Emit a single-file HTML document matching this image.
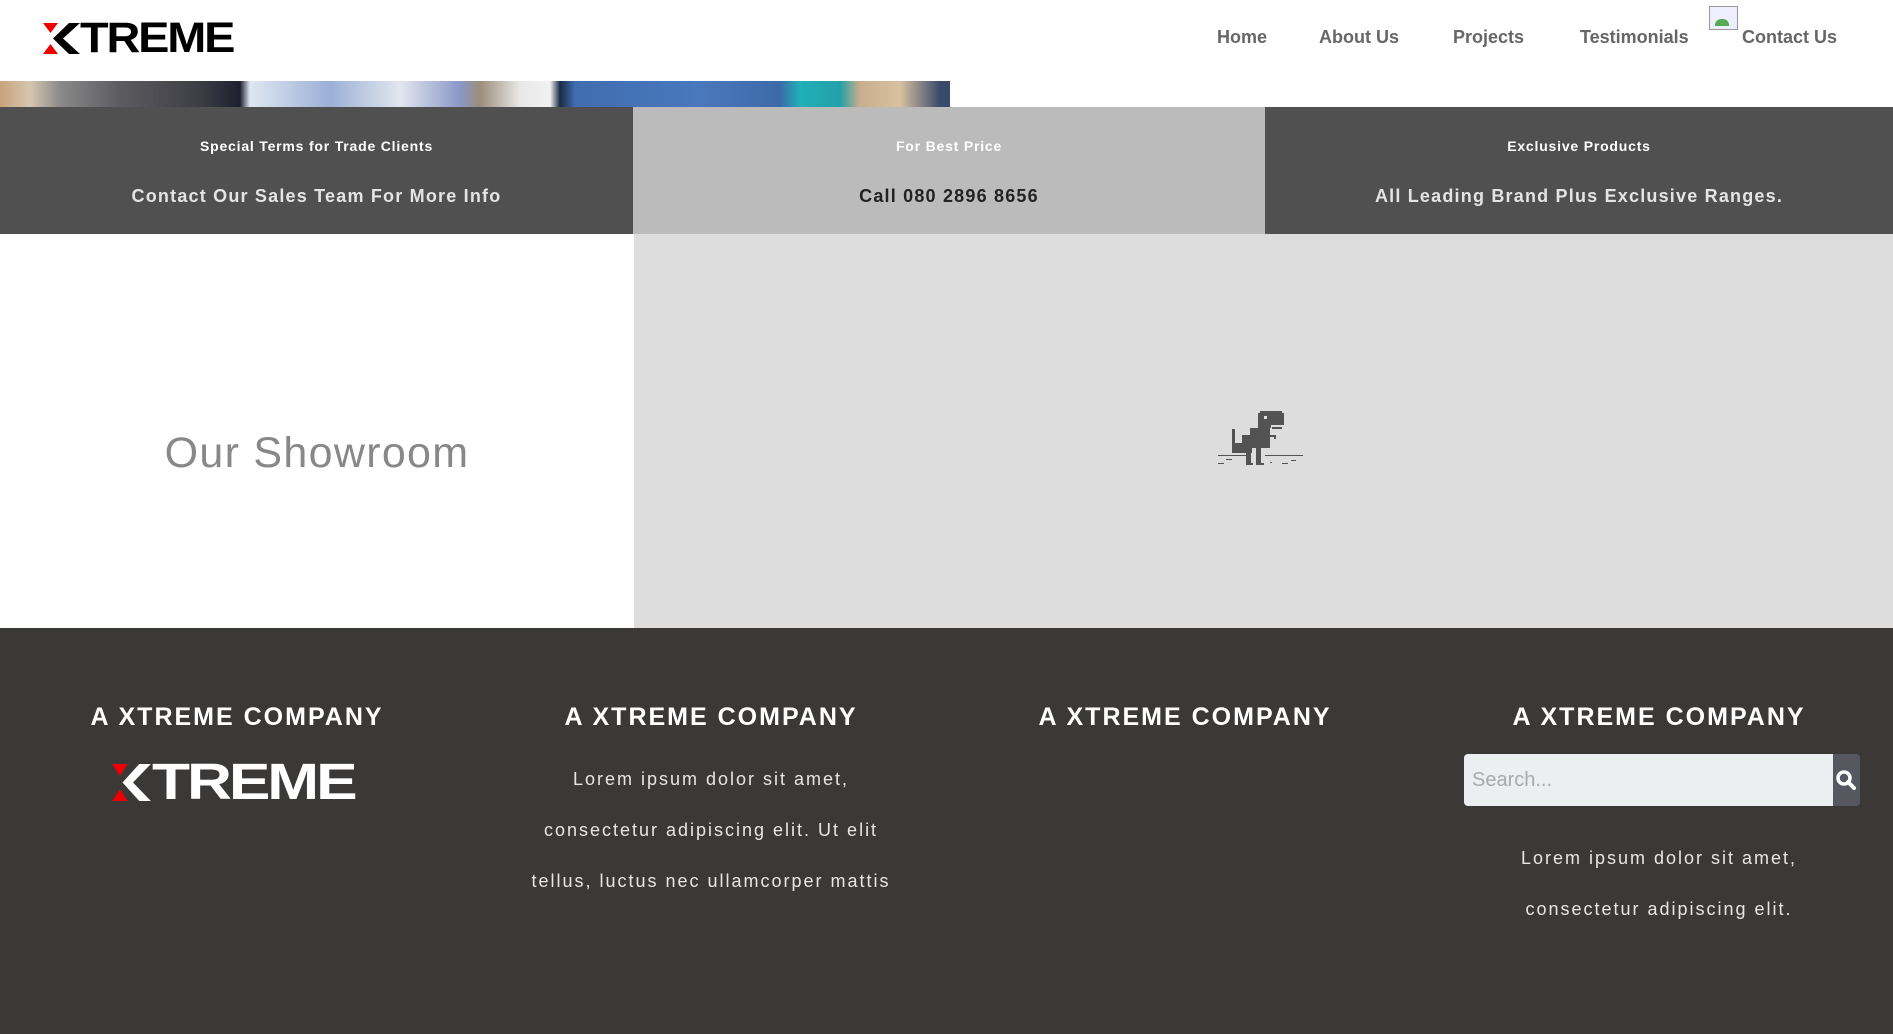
<!DOCTYPE html>
<html><head><meta charset="utf-8"><style>
*{margin:0;padding:0;box-sizing:border-box}
body{width:1893px;height:1034px;overflow:hidden;font-family:"Liberation Sans",Arial,sans-serif;background:#fff;position:relative}
.abs{position:absolute}
.nav{position:absolute;top:27px;font-size:18px;font-weight:bold;color:#666}
.band{position:absolute;top:107px;height:127px;text-align:center}
.band .t{position:absolute;top:31px;width:100%;font-size:14px;font-weight:bold;letter-spacing:0.8px;color:#fff}
.band .m{position:absolute;top:79px;width:100%;font-size:18px;font-weight:bold;letter-spacing:1.2px;color:#e4e4e4}
.fh{position:absolute;top:703px;width:474px;text-align:center;font-size:25px;font-weight:bold;letter-spacing:2px;color:#fff}
.fp{position:absolute;width:474px;text-align:center;font-size:18px;letter-spacing:2px;color:#e6e6e6;line-height:51px}
</style></head><body>
<svg class="abs" style="left:43px;top:23px" width="40" height="31" viewBox="0 0 40 31">
<polygon points="0,0 15,0 7.5,10" fill="#e00"/>
<polygon points="0,31 15,31 7.5,21" fill="#e00"/>
<polygon points="26,0 37,0 20,15.5 37,31 26,31 10,15.5" fill="#000"/>
</svg>
<div class="abs" style="left:80px;top:14px;font-size:43px;font-weight:bold;letter-spacing:-2px;color:#000;line-height:49px;transform:scaleX(1.09);transform-origin:0 0">TREME</div>
<div class="nav" style="left:1217px">Home</div>
<div class="nav" style="left:1319px">About Us</div>
<div class="nav" style="left:1453px">Projects</div>
<div class="nav" style="left:1580px">Testimonials</div>
<div class="abs" style="left:1709px;top:6px;width:29px;height:24px;border:1px solid #999;background:#eef"><div style="position:absolute;left:5px;bottom:3px;width:14px;height:7px;background:#5a5;border-radius:6px 6px 0 0"></div></div>
<div class="nav" style="left:1742px">Contact Us</div>
<div class="abs" style="left:0;top:81px;width:950px;height:26px;background:linear-gradient(90deg,#c9a37a 0,#d6c6b0 30px,#8a8a8a 60px,#5c5c60 120px,#3d3d45 200px,#1e2030 240px,#dfe6f2 250px,#9bb0d6 330px,#e2e6ee 400px,#8a98c8 460px,#9b8e7a 480px,#e8e8e8 520px,#f2f2f2 550px,#1a2a44 560px,#3f6db0 575px,#4a78bc 700px,#3c6aa8 780px,#20b0b8 800px,#22a0a8 840px,#c8ae8c 860px,#d8c0a0 900px,#3a4a6a 940px)"></div>
<div class="band" style="left:0;width:633px;background:#505050"><div class="t">Special Terms for Trade Clients</div><div class="m">Contact Our Sales Team For More Info</div></div>
<div class="band" style="left:633px;width:632px;background:#bbbbbb"><div class="t">For Best Price</div><div class="m" style="color:#222">Call 080 2896 8656</div></div>
<div class="band" style="left:1265px;width:628px;background:#505050"><div class="t">Exclusive Products</div><div class="m">All Leading Brand Plus Exclusive Ranges.</div></div>
<div class="abs" style="left:0;top:234px;width:634px;height:394px;background:#fff"></div>
<div class="abs" style="left:0;top:429px;width:634px;text-align:center;font-size:43px;letter-spacing:1.3px;color:#888">Our Showroom</div>
<div class="abs" style="left:634px;top:234px;width:1259px;height:394px;background:#dddddd"></div>
<svg class="abs" style="left:1218px;top:411px" width="86" height="60" viewBox="0 0 86 60" shape-rendering="crispEdges" fill="#535353">
<rect x="40" y="2" width="26" height="12"/><rect x="42" y="0" width="22" height="2"/><rect x="40" y="14" width="13" height="3"/><rect x="54" y="16" width="10" height="2"/>
<rect x="32" y="17" width="20" height="20"/><rect x="24" y="24" width="10" height="18"/><rect x="14" y="32" width="14" height="10"/><rect x="14" y="18" width="3" height="18"/>
<rect x="52" y="24" width="6" height="2"/><rect x="56" y="24" width="2" height="4"/>
<rect x="28" y="40" width="5" height="14"/><rect x="38" y="37" width="5" height="17"/><rect x="43" y="52" width="3" height="2"/><rect x="33" y="52" width="2" height="2"/>
<rect x="0" y="44" width="28" height="1"/><rect x="47" y="44" width="38" height="1"/>
<rect x="8" y="48" width="6" height="1"/><rect x="0" y="52" width="6" height="1"/><rect x="73" y="49" width="5" height="1"/><rect x="64" y="52" width="6" height="1"/><rect x="52" y="51" width="2" height="1"/>
<rect x="46" y="5" width="3" height="3" fill="#ddd"/>
</svg>
<div class="abs" style="left:0;top:628px;width:1893px;height:406px;background:#3a3938"></div>
<div class="fh" style="left:0">A XTREME COMPANY</div>
<div class="fh" style="left:474px">A XTREME COMPANY</div>
<div class="fh" style="left:948px">A XTREME COMPANY</div>
<div class="fh" style="left:1422px">A XTREME COMPANY</div>
<svg class="abs" style="left:112px;top:764px" width="42" height="37" viewBox="0 0 40 31" preserveAspectRatio="none">
<polygon points="0,0 15,0 7.5,10" fill="#e00"/>
<polygon points="0,31 15,31 7.5,21" fill="#e00"/>
<polygon points="26,0 37,0 20,15.5 37,31 26,31 10,15.5" fill="#fff"/>
</svg>
<div class="abs" style="left:152px;top:753px;font-size:51px;font-weight:bold;letter-spacing:-2.5px;color:#fff;line-height:58px;transform:scaleX(1.22);transform-origin:0 0">TREME</div>
<div class="fp" style="left:474px;top:754px">Lorem ipsum dolor sit amet,<br>consectetur adipiscing elit. Ut elit<br>tellus, luctus nec ullamcorper mattis</div>
<div class="abs" style="left:1464px;top:754px;width:369px;height:52px;background:#eceef1;border-radius:4px 0 0 4px;font-size:20px;color:#aaa;padding:15px 0 0 8px">Search...</div>
<div class="abs" style="left:1833px;top:754px;width:27px;height:52px;background:#55585e;border-radius:0 4px 4px 0"></div>
<svg class="abs" style="left:1835px;top:769px" width="22" height="22" viewBox="0 0 22 22"><circle cx="9" cy="9" r="6" stroke="#fff" stroke-width="3.5" fill="none"/><line x1="13" y1="13" x2="19" y2="19" stroke="#fff" stroke-width="4" stroke-linecap="round"/></svg>
<div class="fp" style="left:1422px;top:833px">Lorem ipsum dolor sit amet,<br>consectetur adipiscing elit.</div>
</body></html>
